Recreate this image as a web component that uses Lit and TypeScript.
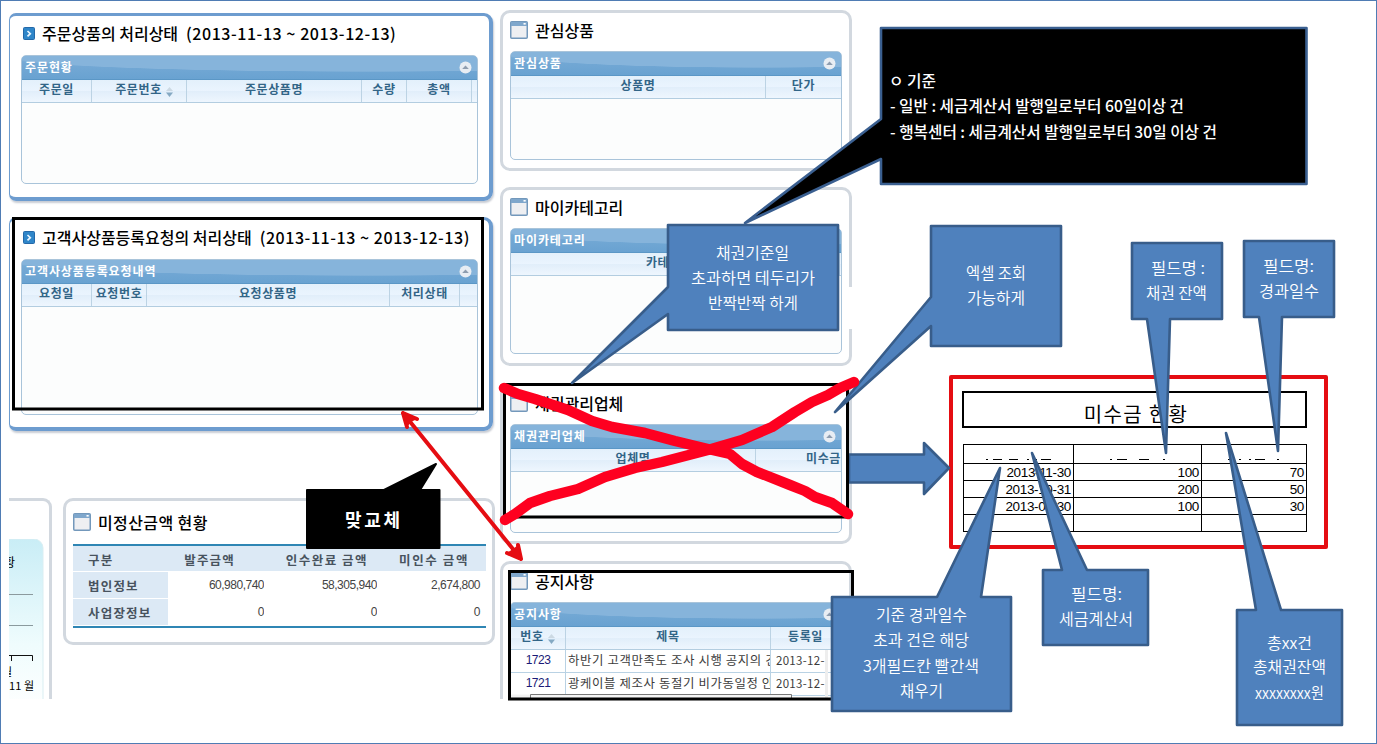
import { LitElement, html, svg, css, nothing } from "lit";
import { customElement, property } from "lit/decorators.js";
import { styleMap } from "lit/directives/style-map.js";

interface Col { label: string; w: number; sort?: boolean; cls?: string }

@customElement("data-grid")
class DataGrid extends LitElement {
  @property() caption = "";
  @property({ attribute: false }) cols: Col[] = [];
  @property({ attribute: false }) rows: string[][] = [];

  static styles = css`
    :host { display: flex; flex-direction: column; box-sizing: border-box; border: 1px solid #a9c4da; border-radius: 5px; overflow: hidden; background: #fcfdfd; }
    .cap { height: 24px; flex: none; display: flex; align-items: center; justify-content: space-between; margin: 0; margin-top: -1px; padding: 0 5px 0 3px;
      background: radial-gradient(ellipse 80% 62% at 76% 8%, #86b4db 97%, transparent 100%), linear-gradient(#7badd7, #69a2d1); border-bottom: 1px solid #5b97c6;
      color: #fff; font-weight: 700; font-size: 12px; letter-spacing: 0.9px; line-height: 20px; white-space: nowrap; }
    .cap span { padding-bottom: 1px; }
    .head { display: flex; flex: none; height: 23px; background: linear-gradient(#e3f0fb, #eaf4fe 50%, #e1eefa 51%, #eef6fe); border-bottom: 1px solid #b3cde0; box-sizing: border-box; }
    .th { box-sizing: border-box; flex: none; border-right: 1px solid #bcd3e4; text-align: center; white-space: nowrap; overflow: hidden;
      font-size: 12px; font-weight: 700; color: #326587; letter-spacing: 0.6px; line-height: 17px; }
    .cut { text-align: right; }
    .sorted { padding-left: 11px; }
    .tr { display: flex; height: 23px; flex: none; box-sizing: border-box; border-bottom: 1px solid #b9d2e4; background: #fff; }
    .td { box-sizing: border-box; flex: none; border-right: 1px solid #b9d2e4; padding: 0 2px; font-size: 12.4px; line-height: 21px; color: #3c3c3c; white-space: nowrap; overflow: hidden; letter-spacing: 0.62px; }
    .num { text-align: center; color: #1a1a78; font-family: "Liberation Sans", sans-serif; font-size: 12px; letter-spacing: -0.5px; }
    .date { padding-left: 5px; font-size: 11.5px; letter-spacing: 0.3px; }
    .sort { vertical-align: -3px; margin-left: 3px; }
  `;

  render() {
    return html`
      <div class="cap"><span>${this.caption}</span>
        <svg width="13" height="13" viewBox="0 0 13 13"><circle cx="6.5" cy="6.5" r="6" fill="#e8edf3"/><path d="M3.2 8 6.5 4.6 9.8 8z" fill="#8e9daf"/></svg>
      </div>
      <div class="head">${this.cols.map((c) => html`<div class="th ${c.cls ?? ""} ${c.sort && c.w > 60 ? "sorted" : ""}" style=${styleMap({ width: c.w + "px" })}>${c.label}${c.sort
        ? html`<svg class="sort" width="9" height="10" viewBox="0 0 9 10"><path d="M1 4 4.5 0 8 4z" fill="#ccd9e3"/><path d="M1 5.5h7L4.5 10z" fill="#85a9c3"/></svg>` : nothing}</div>`)}
      </div>
      ${this.rows.map((r) => html`<div class="tr">${r.map((v, i) => html`<div class="td ${["num", "", "date"][i]}" style=${styleMap({ width: this.cols[i].w + "px" })}>${v}</div>`)}</div>`)}
    `;
  }
}

interface Line { t: string; x: number; y: number; w: number }
interface Callout { d: string; lines: Line[] }

const CALLOUTS: Callout[] = [
  { d: "M668 225H838V330H668V314L572 383L668 287Z", lines: [
    { t: "채권기준일", x: 716, y: 259, w: 73 }, { t: "초과하면 테두리가", x: 691, y: 284, w: 124 }, { t: "반짝반짝 하게", x: 708, y: 309, w: 90 }] },
  { d: "M931 226H1061V346H931V326L835 412L931 297Z", lines: [
    { t: "엑셀 조회", x: 966, y: 279, w: 60 }, { t: "가능하게", x: 967, y: 304, w: 58 }] },
  { d: "M1132 243H1222V319H1170L1166 453L1147 319H1132Z", lines: [
    { t: "필드명 :", x: 1151, y: 274, w: 54 }, { t: "채권 잔액", x: 1146, y: 299, w: 61 }] },
  { d: "M1244 241H1334V317H1282L1278 451L1259 317H1244Z", lines: [
    { t: "필드명:", x: 1263, y: 272, w: 51 }, { t: "경과일수", x: 1259, y: 297, w: 60 }] },
  { d: "M832 597H937L1000 468L981 597H1011V711H832Z", lines: [
    { t: "기준 경과일수", x: 876, y: 621, w: 91 }, { t: "초과 건은 해당", x: 873, y: 646, w: 96 },
    { t: "3개필드칸 빨간색", x: 863, y: 672, w: 116 }, { t: "채우기", x: 900, y: 697, w: 43 }] },
  { d: "M1043 570H1062L1032 453L1087 570H1148V645H1043Z", lines: [
    { t: "필드명:", x: 1071, y: 600, w: 51 }, { t: "세금계산서", x: 1059, y: 625, w: 74 }] },
  { d: "M1237 610H1256L1226 433L1281 610H1342V725H1237Z", lines: [
    { t: "총xx건", x: 1267, y: 649, w: 45 }, { t: "총채권잔액", x: 1253, y: 673, w: 73 }, { t: "xxxxxxxx원", x: 1255, y: 699, w: 69 }] },
];

@customElement("app-root")
class AppRoot extends LitElement {
  static styles = css`
    :host { display: block; width: 1377px; height: 744px; position: relative; overflow: hidden; background: #fff; box-shadow: inset 0 0 0 1px #4f7cb4;
      font-family: "Noto Sans CJK KR", "Liberation Sans", sans-serif; color: #000; }
    .page { display: flex; align-items: flex-start; padding-left: 9px; height: 744px; box-sizing: border-box; }
    .left { width: 485px; padding-top: 13px; display: flex; flex-direction: column; flex: none; }
    .right { width: 352px; padding-top: 10px; margin-left: 6px; display: flex; flex-direction: column; flex: none; }
    .panel { box-sizing: border-box; display: flex; flex-direction: column; flex: none; }
    .blue { border: solid #6d9ccf; border-width: 3px 4px 4px 1px; border-radius: 7px 9px 9px 7px; padding: 0 11px 0 11px; box-shadow: 1px 2px 2px #c8ccd4; width: 484px; }
    .gray { border: 3px solid #d2d8df; border-radius: 10px; padding: 0 7px 0 7px; }
    .orders { height: 188px; }
    .requests { height: 214px; margin-top: 16px; }
    .fav { height: 161px; }
    .cat { height: 179px; margin-top: 16px; }
    .bond { height: 161px; margin-top: 17px; }
    .notice { height: 138px; margin-top: 17px; border-bottom: 0; border-radius: 10px 10px 0 0; }
    .title { display: flex; align-items: center; height: 38px; box-sizing: border-box; padding-bottom: 4px; font-size: 16px; font-weight: 500; white-space: nowrap; flex: none; }
    .blue .title { height: 39px; gap: 7px; padding: 0 0 5px 2px; }
    .gray .title { gap: 7px; }
    .range { letter-spacing: 0.55px; margin-left: 1px; }
    .g1 { height: 129px; } .g2 { height: 156px; } .g3 { height: 109px; } .g4 { height: 126px; } .g5 { height: 95px; }
    .g5 { border-bottom: 0; border-radius: 5px 5px 0 0; }
    .bottom { display: flex; align-items: flex-start; margin-top: 67px; width: 487px; }
    .chart { width: 43px; height: 201px; flex: none; box-sizing: border-box; border: solid #d2d8df; border-width: 3px 3px 0 0; border-radius: 0 9px 0 0; overflow: hidden; padding-top: 38px; }
    .plot { display: block; }
    .settle { width: 432px; height: 147px; margin-left: 11px; padding: 0 6px 0 7px; }
    .settle .title { height: 43px; padding: 0 0 1px; letter-spacing: 0.4px; }
    .money { display: grid; grid-template-columns: 95px 96px 113px 109px; grid-template-rows: 26px 27px 27px; border: solid #2f86b4; border-width: 2px 0; font-size: 12.5px; line-height: 28px; color: #48535e; }
    .mh { background: #dce9f5; font-weight: 700; white-space: nowrap; letter-spacing: 1.2px; border-bottom: 1px solid #fff; box-sizing: border-box; overflow: hidden; }
    .lead { padding-left: 15px; }
    .mid { text-align: right; }
    .p1 { padding-right: 29px; } .p2 { padding-right: 9px; letter-spacing: 1.5px; } .p3 { padding-right: 17px; letter-spacing: 1.6px; }
    .mv { text-align: right; font-family: "Liberation Sans", sans-serif; font-size: 12px; letter-spacing: -0.5px; color: #444; padding-right: 6px; line-height: 27px; background: #fff; }
    .mv.first { padding-right: 0; } .mv.second { padding-right: 0; }
    .sheet { width: 379px; height: 174px; flex: none; box-sizing: border-box; margin: 375px 0 0 97px; border: 4px solid #e50d12; border-radius: 2px; padding: 12px 17px 0 9px; background: #fff; }
    .stitle { height: 37px; box-sizing: border-box; border: 2px solid #000; text-align: center; font-size: 20px; letter-spacing: 1.3px; line-height: 42px; font-weight: 400; padding-left: 3px; }
    .cells { display: grid; grid-template-columns: 109px 127px 104px; grid-template-rows: 18px repeat(4, 16px); gap: 1px; background: #000; border: 1px solid #000; margin: 16px 0 0 1px; }
    .cell { background: #fff; text-align: right; padding-right: 2px; font-family: "Liberation Sans", sans-serif; font-size: 13.5px; line-height: 17px; letter-spacing: -0.35px; }
    .dash { background: #fff; display: flex; justify-content: center; align-items: flex-end; }
    .overlay { position: absolute; left: 0; top: 0; }
    .body { fill: #4f81bd; stroke: #385d8a; stroke-width: 2.6; stroke-linejoin: round; }
    .dark { fill: #000; stroke: #3a5f90; stroke-width: 2.6; stroke-linejoin: round; }
    .say { fill: #fff; font-size: 16px; font-weight: 350; }
    .note { fill: #fff; font-size: 15.5px; font-weight: 500; }
    .swap { fill: #fff; font-size: 18px; font-weight: 700; }
    .frame { fill: none; stroke: #000; stroke-width: 3; }
    .pen { fill: none; stroke: #fe0020; stroke-width: 10.5; stroke-linecap: round; stroke-linejoin: round; }
    .red { fill: none; stroke: #e50d12; stroke-width: 4; stroke-linecap: round; stroke-linejoin: round; }
    .tip { fill: #e50d12; stroke: none; }
  `;

  private arrowIcon() {
    return html`<svg width="12" height="13" viewBox="0 0 12 13"><rect x=".5" y=".5" width="11" height="12" rx="1" fill="#2f86c9" stroke="#2468a8"/><path d="M4.5 4 7.3 6.7 4.5 9.4" fill="none" stroke="#eaf6ff" stroke-width="1.7"/></svg>`;
  }

  private windowIcon() {
    return html`<svg width="18" height="18" viewBox="0 0 18 18"><rect x=".75" y=".75" width="16.5" height="16.5" rx="1" fill="#eeeff2" stroke="#7398bb" stroke-width="1.5"/><rect x="1" y="1" width="16" height="4" fill="#7fa7cc"/><rect x="13.5" y="2" width="2.2" height="1.6" fill="#fff"/></svg>`;
  }

  private head(name: string) {
    return html`<div class="title">${this.windowIcon()}<span>${name}</span></div>`;
  }

  private lines(list: Line[], cls: string) {
    return list.map((l) => svg`<text class=${cls} x=${l.x} y=${l.y} textLength=${l.w} lengthAdjust="spacingAndGlyphs">${l.t}</text>`);
  }

  render() {
    const range = html`<span class="range">(2013-11-13 ~ 2013-12-13)</span>`;
    return html`
      <div class="page">
        <div class="left">
          <section class="panel blue orders">
            <div class="title">${this.arrowIcon()}<span>주문상품의 처리상태</span>${range}</div>
            <data-grid class="g1" caption="주문현황" .cols=${[
              { label: "주문일", w: 70 }, { label: "주문번호", w: 95, sort: true }, { label: "주문상품명", w: 175 }, { label: "수량", w: 45 }, { label: "총액", w: 65 }]}></data-grid>
          </section>
          <section class="panel blue requests">
            <div class="title">${this.arrowIcon()}<span>고객사상품등록요청의 처리상태</span>${range}</div>
            <data-grid class="g2" caption="고객사상품등록요청내역" .cols=${[
              { label: "요청일", w: 70 }, { label: "요청번호", w: 55 }, { label: "요청상품명", w: 243 }, { label: "처리상태", w: 70 }]}></data-grid>
          </section>
          <div class="bottom">
            <div class="chart">
              <svg class="plot" width="43" height="160" viewBox="9 539 43 160">
                <defs><linearGradient id="c" x1="0" y1="0" x2="0" y2="1"><stop offset="0" stop-color="#c9edf6"/><stop offset=".6" stop-color="#effcfd"/><stop offset="1" stop-color="#fff"/></linearGradient></defs>
                <rect x="-20" y="539" width="63" height="175" rx="9" fill="url(#c)" stroke="#d9eef2"/>
                <path d="M9 594.5H33M9 625.5H33" stroke="#8b9a9e"/>
                <path d="M9 655.5H32.5V661M11.5 655V661" stroke="#111" fill="none"/>
                <text x="4" y="567" font-size="12">황</text>
                <text x="2" y="676" font-size="11">월</text>
                <text x="9" y="690" font-size="11" textLength="25">11 월</text>
              </svg>
            </div>
            <section class="panel gray settle">
              ${this.head("미정산금액 현황")}
              <div class="money">
                <div class="mh lead">구분</div><div class="mh mid p1">발주금액</div><div class="mh mid p2">인수완료 금액</div><div class="mh mid p3">미인수 금액</div>
                <div class="mh lead">법인정보</div><div class="mv first">60,980,740</div><div class="mv second">58,305,940</div><div class="mv">2,674,800</div>
                <div class="mh lead">사업장정보</div><div class="mv first">0</div><div class="mv second">0</div><div class="mv">0</div>
              </div>
            </section>
          </div>
        </div>
        <div class="right">
          <section class="panel gray fav">${this.head("관심상품")}
            <data-grid class="g3" caption="관심상품" .cols=${[{ label: "상품명", w: 255 }, { label: "단가", w: 76 }]}></data-grid></section>
          <section class="panel gray cat">${this.head("마이카테고리")}
            <data-grid class="g4" caption="마이카테고리" .cols=${[{ label: "카테고리명", w: 329 }]}></data-grid></section>
          <section class="panel gray bond">${this.head("채권관리업체")}
            <data-grid class="g3" caption="채권관리업체" .cols=${[{ label: "업체명", w: 245 }, { label: "미수금", w: 86, cls: "cut" }]}></data-grid></section>
          <section class="panel gray notice">${this.head("공지사항")}
            <data-grid class="g5" caption="공지사항" .cols=${[{ label: "번호", w: 55, sort: true }, { label: "제목", w: 205 }, { label: "등록일", w: 70 }]}
              .rows=${[["1723", "하반기 고객만족도 조사 시행 공지의 건", "2013-12-"], ["1721", "광케이블 제조사 동절기 비가동일정 안", "2013-12-"]]}></data-grid></section>
        </div>
        <section class="sheet">
          <div class="stitle">미수금 현황</div>
          <div class="cells">
            ${[["1 6h2M8 6h9M24 6h9M42 6h2M50 6h2M56 6h10", 68], ["1 6h2M8 6h10M30 6h10M54 6h2", 58], ["1 6h3M12 6h2M22 6h2M28 6h10M50 6h2", 54]].map(([d, w]) =>
              html`<div class="dash"><svg width=${w} height="9" viewBox="0 0 ${w} 9"><path d="M${d}" transform="translate(0 -.5)" stroke="#000"/></svg></div>`)}
            ${["2013-11-30", "100", "70", "2013-10-31", "200", "50", "2013-09-30", "100", "30", "", "", ""].map((v) => html`<div class="cell">${v}</div>`)}
          </div>
        </section>
      </div>
      <svg class="overlay" width="1377" height="744" viewBox="0 0 1377 744">
        <rect x="847" y="287" width="7" height="42" fill="#fff"/>
        <path class="body" d="M849 454.500H924V443L949 468L924 494V482.500H849Z"/>
        <rect x="825" y="650" width="3" height="48" fill="#eee"/>
        <path d="M511 698V694.500H530.500V698" fill="#f2f2f2"/>
        <path d="M530.500 698V694.500H791.500V698" fill="#f4f4f4" stroke="#777"/>
        <rect class="frame" x="13.500" y="218.500" width="469" height="190.500"/>
        <rect class="frame" x="504.500" y="384.500" width="343" height="132.500"/>
        <rect class="frame" x="509.500" y="571.500" width="343" height="127.500"/>
        <path class="dark" d="M881 28H1306.500V184H881V159L745 223L881 119Z"/>
        ${this.lines([
          { t: "ㅇ 기준", x: 889, y: 87, w: 47 },
          { t: "- 일반 : 세금계산서 발행일로부터 60일이상 건", x: 890, y: 112, w: 294 },
          { t: "- 행복센터 : 세금계산서 발행일로부터 30일 이상 건", x: 890, y: 138, w: 327 }], "note")}
        ${CALLOUTS.map((c) => svg`<path class="body" d=${c.d}/>${this.lines(c.lines, "say")}`)}
        <path d="M307 490H384L436 464L420 490H439.500V548H307Z" stroke="#000" stroke-width="2" stroke-linejoin="round"/>
        <text class="swap" x="345" y="527" textLength="55">맞교체</text>
        <path class="red" d="M403 413L521 559M407 427L403 413L417 419M507 553L521 559L518 545"/>
        <path class="tip" d="M403 413L407 427L411 422L417 419ZM521 559L507 553L513 549L518 545Z"/>
        <path class="pen" d="M504 388L518 394L535 399L568 410L592 421L612 427L645 433L675 441L708 449L730 454L742 464L757 472L790 485L805 491L815 497L832 503L848 514"/>
        <path class="pen" d="M505 520L515 514L530 503L550 496L578 489L605 477L635 468L662 462L708 450L742 440L772 427L795 412L812 402L828 395L840 388L854 382"/>
      </svg>
    `;
  }
}
